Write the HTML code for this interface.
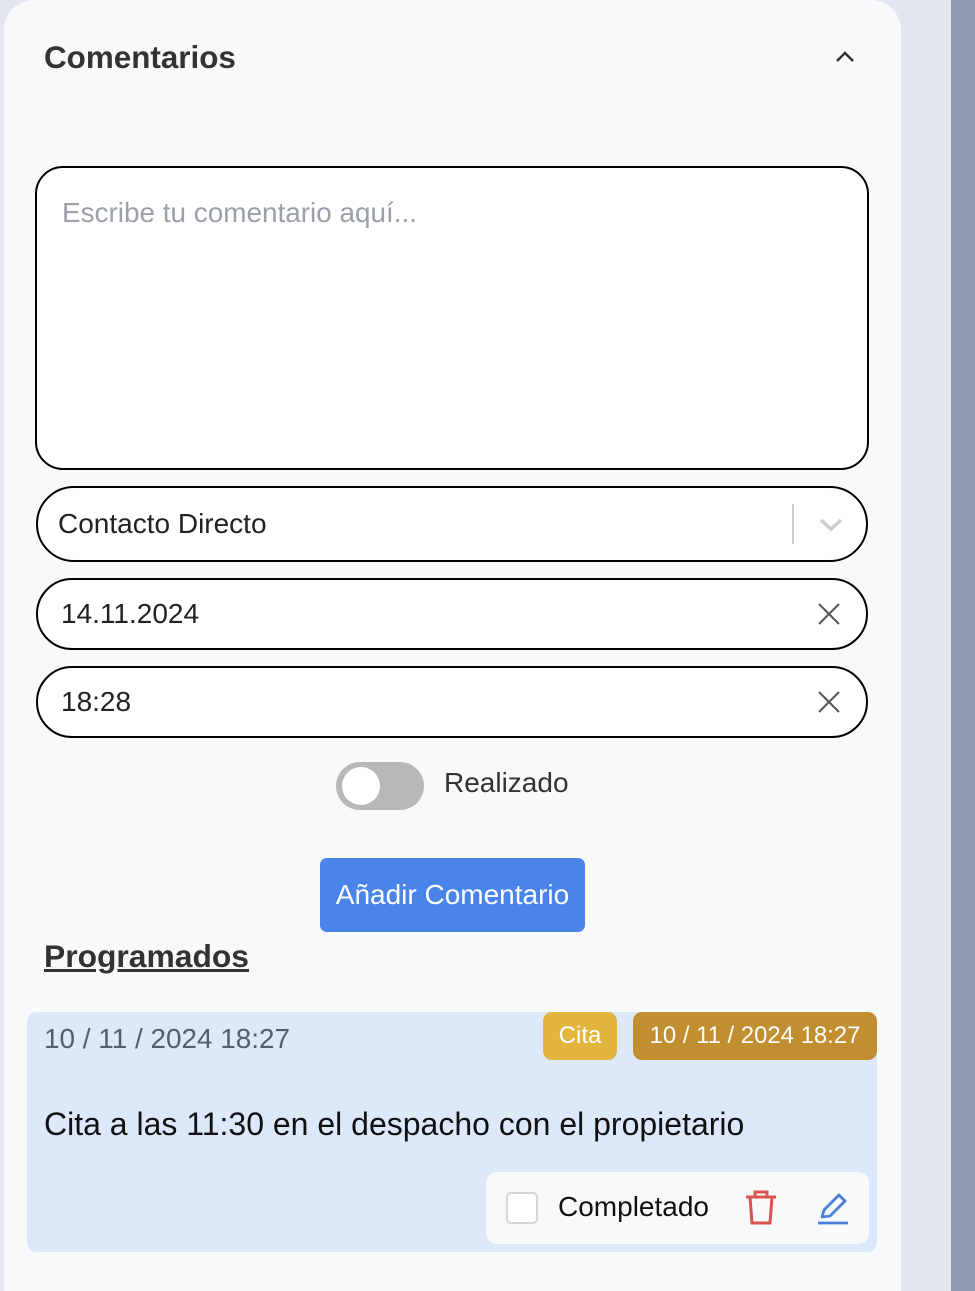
<!DOCTYPE html>
<html><head><meta charset="utf-8"><style>
*{box-sizing:border-box;margin:0;padding:0}
body{width:975px;height:1291px;overflow:hidden;background:#e2e6ee;font-family:"Liberation Sans",Arial,sans-serif;position:relative}
.side{position:absolute;left:951px;top:0;width:24px;height:1291px;background:#8f9aae}
.panel{position:absolute;left:4px;top:0;width:897px;height:1291px;background:#f8f9fb;border-radius:30px 30px 0 0}
.abs{position:absolute}
.field{position:absolute;left:36px;width:832px;border:2px solid #000;background:#fff;color:#222}
</style></head><body>
<div class="side"></div>
<div class="panel"></div>
<div class="abs" style="left:44px;top:40px;font-size:31.4px;font-weight:bold;color:#333">Comentarios</div>
<svg class="abs" style="left:834px;top:49px" width="22" height="16" viewBox="0 0 22 16"><path d="M3 12 L11 4 L19 12" fill="none" stroke="#333" stroke-width="2.5"/></svg>
<div class="field" style="left:35px;top:166px;width:834px;height:304px;border-radius:28px"></div>
<div class="abs" style="left:62px;top:197px;font-size:27.9px;color:#9aa0a8">Escribe tu comentario aquí...</div>
<div class="field" style="top:486px;height:76px;border-radius:38px"></div>
<div class="abs" style="left:58px;top:508px;font-size:28px;color:#222">Contacto Directo</div>
<div class="abs" style="left:792px;top:504px;width:2px;height:40px;background:#ccc"></div>
<svg class="abs" style="left:818px;top:515px" width="26" height="18" viewBox="0 0 26 18"><path d="M3 5 L13 14 L23 5" fill="none" stroke="#ccc" stroke-width="3.5"/></svg>
<div class="field" style="top:578px;height:72px;border-radius:36px"></div>
<div class="abs" style="left:61px;top:598px;font-size:28px;color:#222">14.11.2024</div>
<svg class="abs" style="left:817px;top:602px" width="24" height="24" viewBox="0 0 24 24"><path d="M2 2 L22 22 M22 2 L2 22" stroke="#555" stroke-width="2"/></svg>
<div class="field" style="top:666px;height:72px;border-radius:36px"></div>
<div class="abs" style="left:61px;top:686px;font-size:28px;color:#222">18:28</div>
<svg class="abs" style="left:817px;top:690px" width="24" height="24" viewBox="0 0 24 24"><path d="M2 2 L22 22 M22 2 L2 22" stroke="#555" stroke-width="2"/></svg>
<div class="abs" style="left:336px;top:762px;width:88px;height:48px;border-radius:24px;background:#b8b8b8"></div>
<div class="abs" style="left:342px;top:767px;width:38px;height:38px;border-radius:50%;background:#fff"></div>
<div class="abs" style="left:444px;top:767px;font-size:28px;color:#333">Realizado</div>
<div class="abs" style="left:320px;top:858px;width:265px;height:74px;border-radius:7px;background:#4a84ea;color:#fff;font-size:28px;text-align:center;line-height:74px">Añadir Comentario</div>
<div class="abs" style="left:44px;top:938px;font-size:31.8px;font-weight:bold;color:#333;text-decoration:underline">Programados</div>
<div class="abs" style="left:27px;top:1012px;width:850px;height:240px;border-radius:10px;background:#dde8fa"></div>
<div class="abs" style="left:44px;top:1023px;font-size:27.9px;color:#555e6b">10 / 11 / 2024 18:27</div>
<div class="abs" style="left:543px;top:1012px;width:74px;height:48px;border-radius:9px;background:#e2b53f;color:#fff;font-size:24px;text-align:center;line-height:48px">Cita</div>
<div class="abs" style="left:633px;top:1012px;width:244px;height:48px;border-radius:9px;background:#c28f30;color:#fff;font-size:23.9px;text-align:center;line-height:48px">10 / 11 / 2024 18:27</div>
<div class="abs" style="left:44px;top:1106px;font-size:32px;color:#111">Cita a las 11:30 en el despacho con el propietario</div>
<div class="abs" style="left:486px;top:1172px;width:383px;height:72px;border-radius:11px;background:#f8f9fb"></div>
<div class="abs" style="left:506px;top:1192px;width:32px;height:32px;border-radius:5px;border:2px solid #d6d6d6;background:#fff"></div>
<div class="abs" style="left:558px;top:1191px;font-size:28px;color:#111">Completado</div>
<svg class="abs" style="left:744px;top:1190px" width="34" height="36" viewBox="0 0 34 36"><path d="M2 7 H32 M11 7 V2 H23 V7 M6 7 L8 33 H26 L28 7" fill="none" stroke="#d9534f" stroke-width="3"/></svg>
<svg class="abs" style="left:816px;top:1190px" width="34" height="36" viewBox="0 0 34 36"><path d="M6 27 L8 20 L23 5 L29 11 L14 26 Z M2 33 H32" fill="none" stroke="#4a7fdc" stroke-width="2.8" stroke-linejoin="round"/></svg>
</body></html>
